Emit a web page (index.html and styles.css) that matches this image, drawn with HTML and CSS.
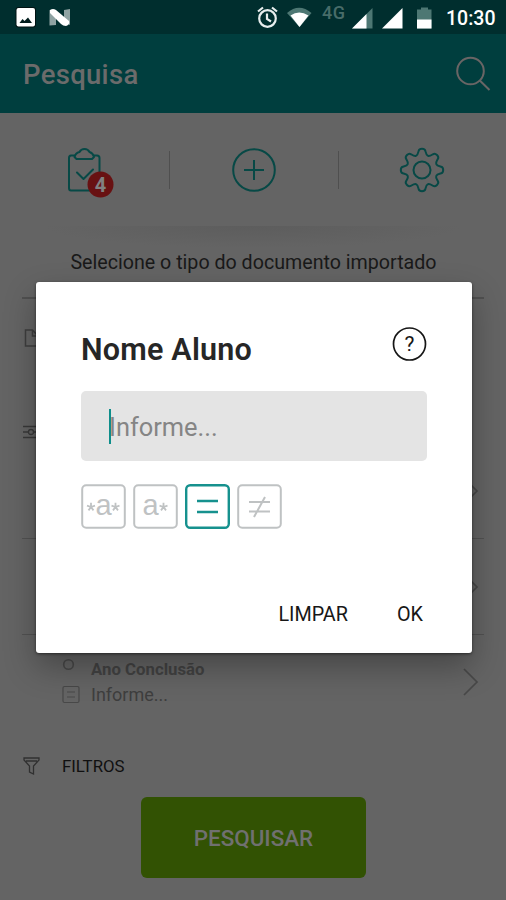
FILE: index.html
```html
<!DOCTYPE html>
<html lang="pt-BR">
<head>
<meta charset="utf-8">
<title>Pesquisa</title>
<link rel="stylesheet" href="styles.css">
</head>
<body>
<div class="screen">
  <div class="status">
    <svg class="status-left" width="80" height="34" viewBox="0 0 80 34">
      <rect x="15.500" y="7" width="20.500" height="20.500" rx="3" fill="#000" opacity=".6"/>
      <rect x="16.500" y="8" width="18.500" height="18.500" rx="2" fill="#fff"/>
      <path d="M19.500 23 L22.500 19 L24.500 21 L28 17.500 L32 23 Z" fill="#001c1c"/>
      <path d="M49.500 10 L56 12 V25 L49.500 25.500 Z M64 10 L70 9 V25 L64 22 Z" fill="#8fa3a3"/>
      <path d="M50 10 Q53 8 56 10 L69 21 Q70 25 66 26 Q63 26 61 24 L50 13 Z" fill="#fff"/>
    </svg>
    <div class="status-right">
      <svg width="188" height="34" viewBox="0 0 188 34">
        <g fill="none" stroke="#e8eeee" stroke-width="2.200">
          <circle cx="14.500" cy="18.500" r="8.300"/>
          <path d="M14 13.500 V19 L18 21.500 M5 11.500 L10 7.500 M19 7.500 L24 11.500"/>
        </g>
        <path d="M34 13 Q46 2.500 58.500 13 L46.500 27 Z" fill="#4d7773"/>
        <path d="M37.500 15.500 Q46 9.500 55.500 15.500 L46.500 27 Z" fill="#fff"/>
        <text class="net" x="69" y="19">4G</text>
        <path d="M119.500 8 V28.500 H99 Z" fill="#4d7773"/>
        <path d="M113.500 14 V28.500 H99 Z M149.500 8 V28.500 H129 Z" fill="#fff"/>
        <path d="M164 9.500 H168 V7.500 H175 V9.500 H178.500 V28.500 H164 Z" fill="#4d7773"/>
        <path d="M164 19.500 H178.500 V28.500 H164 Z" fill="#fff"/>
      </svg>
      <span class="clock">10:30</span>
    </div>
  </div>
  <header class="bar">
    <h1>Pesquisa</h1>
    <svg width="36" height="36" viewBox="0 0 36 36" fill="none" stroke="#696565" stroke-width="2">
      <circle cx="15.500" cy="15" r="13.300"/><path d="M24.800 24.500 L34.500 34"/>
    </svg>
  </header>
  <nav class="tools">
    <div class="tool">
      <svg width="48" height="52" viewBox="0 0 48 52">
        <g fill="none" stroke="#074946" stroke-width="2" stroke-linejoin="round" stroke-linecap="round">
          <path d="M8 8.500 H4 Q2 8.500 2 11 V41 Q2 43.500 4 43.500 H30 Q32.500 43.500 32.500 41 V11 Q32.500 8.500 30 8.500 H27"/>
          <path d="M7.500 10 Q8.500 6 12.500 5 Q14 2 17.500 2 Q21 2 22.500 5 Q26 6 27 10 L25 12 H9.500 Z"/>
          <path d="M10 25.500 L16.500 32 L26 22.500"/>
        </g>
        <circle cx="33.500" cy="37.500" r="13" fill="#681112"/>
        <text class="badge" x="33.500" y="45" text-anchor="middle">4</text>
      </svg>
    </div>
    <div class="tool">
      <svg width="46" height="46" viewBox="-23 -23 46 46" fill="none" stroke="#074946" stroke-width="2">
        <circle r="20.800"/><path d="M-10 0 H10 M0 -10 V10"/>
      </svg>
    </div>
    <div class="tool">
      <svg width="46" height="46" viewBox="-23 -23 46 46" fill="none" stroke="#074946" stroke-width="2">
        <defs><path id="tooth" d="M-5.900 -14.200 C-4.100 -15 -3.800 -17.500 -3.300 -19.300 C-2.600 -21.800 2.600 -21.800 3.300 -19.300 C3.800 -17.500 4.100 -15 5.900 -14.200"/></defs>
        <use href="#tooth"/>
        <use href="#tooth" transform="rotate(45)"/>
        <use href="#tooth" transform="rotate(90)"/>
        <use href="#tooth" transform="rotate(135)"/>
        <use href="#tooth" transform="rotate(180)"/>
        <use href="#tooth" transform="rotate(225)"/>
        <use href="#tooth" transform="rotate(270)"/>
        <use href="#tooth" transform="rotate(315)"/>
        <circle r="8.500"/>
      </svg>
    </div>
  </nav>
  <p class="hint">Selecione o tipo do documento importado</p>
  <main class="list">
    <div class="row doc">
      <svg width="18" height="20" viewBox="0 0 18 20" fill="none" stroke="#3e3e3e" stroke-width="1.500"><path d="M3.500 2 H10.500 L16 8 V18 H3.500 Z M10.500 2 V8 H16"/></svg>
    </div>
    <div class="row tune">
      <svg width="20" height="16" viewBox="0 0 20 16" fill="none" stroke="#393939" stroke-width="1.300"><path d="M1 2.500 H20 M1 8 H6 M12 8 H20 M1 13.500 H20"/><circle cx="9" cy="8" r="2.500"/></svg>
    </div>
    <div class="row item">
      <svg class="chev" width="18" height="30" viewBox="0 0 18 30"><path d="M2 2 L15 15 L2 28"/></svg>
    </div>
    <div class="row item">
      <svg class="chev" width="18" height="30" viewBox="0 0 18 30"><path d="M2 2 L15 15 L2 28"/></svg>
    </div>
    <div class="row year">
      <svg width="20" height="50" viewBox="0 0 20 50" fill="none" stroke="#484848" stroke-width="1.600">
        <circle cx="6.500" cy="7.500" r="4.800"/>
        <rect x="1" y="29.500" width="16" height="16" rx="1.500" stroke-width="1.200"/>
        <path d="M5 35 H13 M5 40 H13" stroke-width="1.200"/>
      </svg>
      <div class="year-text"><b>Ano Conclusão</b><span>Informe...</span></div>
      <svg class="chev" width="18" height="30" viewBox="0 0 18 30"><path d="M2 2 L15 15 L2 28"/></svg>
    </div>
    <div class="row filters">
      <svg width="18" height="20" viewBox="0 0 18 20" fill="none" stroke="#303030" stroke-width="1.300"><path d="M2 2 H17 V4 L11.500 10 V18 L7.500 16 V10 L2 4 Z M4 5 H15"/></svg>
      <span>FILTROS</span>
    </div>
  </main>
  <button class="search" type="button">PESQUISAR</button>

  <section class="dialog" role="dialog">
    <div class="dialog-head">
      <h2>Nome Aluno</h2>
      <svg width="36" height="36" viewBox="0 0 36 36">
        <circle cx="18.500" cy="18" r="16" fill="none" stroke="#161616" stroke-width="1.700"/>
        <text class="q" x="18.500" y="25" text-anchor="middle">?</text>
      </svg>
    </div>
    <div class="field"><i class="caret"></i><span>Informe...</span></div>
    <div class="modes">
      <svg class="mode" width="45" height="45" viewBox="0 0 45 45">
        <defs><path id="star" d="M0 0 V-4.200 M0 0 L4 -1.300 M0 0 L2.500 3.400 M0 0 L-2.500 3.400 M0 0 L-4 -1.300"/></defs>
        <rect x="1.200" y="1.200" width="42.600" height="42.600" rx="4"/>
        <text class="letter" x="22.500" y="30.500" text-anchor="middle">a</text>
        <use class="star" href="#star" x="10" y="23"/><use class="star" href="#star" x="34.500" y="23"/>
      </svg>
      <svg class="mode" width="45" height="45" viewBox="0 0 45 45">
        <rect x="1.200" y="1.200" width="42.600" height="42.600" rx="4"/>
        <text class="letter" x="17.500" y="30.500" text-anchor="middle">a</text>
        <use class="star" href="#star" x="30.500" y="23"/>
      </svg>
      <svg class="mode on" width="45" height="45" viewBox="0 0 45 45">
        <rect x="1.200" y="1.200" width="42.600" height="42.600" rx="4"/>
        <path d="M12 17 H33 M12 28 H33"/>
      </svg>
      <svg class="mode" width="45" height="45" viewBox="0 0 45 45">
        <rect x="1.200" y="1.200" width="42.600" height="42.600" rx="4"/>
        <path d="M12 18 H33 M12 27.500 H33 M28 13 L17 33"/>
      </svg>
    </div>
    <div class="actions"><span>LIMPAR</span><span>OK</span></div>
  </section>
</div>
</body>
</html>
```
FILE: styles.css
```css
* { box-sizing: border-box; }
body { margin: 0; font-family: Roboto, "Liberation Sans", sans-serif; }
svg { display: block; flex: none; }
h1, h2, p { margin: 0; }

.screen {
  position: relative;
  width: 506px;
  height: 900px;
  overflow: hidden;
  background: #646464;
}

.status {
  height: 34px;
  display: flex;
  justify-content: space-between;
  background: #002e2e;
}
.status-right { display: flex; align-items: center; width: 253px; }
.clock { margin-left: 5px; font-size: 19.500px; font-weight: 500; color: #fff; white-space: nowrap; padding-top: 2px; }
.net { font-size: 18px; font-weight: 500; letter-spacing: .5px; fill: #486c69; }

.bar {
  height: 79px;
  padding: 0 15px 0 23px;
  display: flex;
  align-items: center;
  justify-content: space-between;
  background: #003e3e;
}
.bar h1 { font-size: 27.500px; font-weight: 500; letter-spacing: .3px; color: #6b6b6b; padding-top: 2px; }

.tools {
  height: 113px;
  display: grid;
  grid-template-columns: 169px 169px 168px;
  align-items: center;
}
.tool { height: 38px; display: flex; align-items: center; justify-content: center; }
.tool + .tool { border-left: 1px solid #4f4f4f; padding-right: 1px; }
.tool:first-child svg { margin: 6px 0 0 13px; }
.badge { font-size: 20px; font-weight: 700; fill: #818181; }

.hint {
  height: 71px;
  padding: 25px 0 0 1px;
  text-align: center;
  font-size: 19.650px;
  line-height: 24px;
  color: #191919;
  white-space: nowrap;
  background: radial-gradient(ellipse 210px 22px at 50% 0, #5d5d5d, #646464) no-repeat;
}

.list { margin: 0 22px; border-top: 2px solid #505050; }
.row { display: flex; align-items: center; }
.doc { height: 78px; }
.tune { height: 66px; padding-top: 47px; align-items: flex-start; }
.item { height: 96px; justify-content: flex-end; border-bottom: 1px solid #525252; }
.item .chev { margin-right: 4px; }
.chev { fill: none; stroke: #484848; stroke-width: 1.700; }
.year { height: 92px; padding: 1px 4px 0 40px; }
.year-text {
  flex: 1;
  margin-left: 9px;
  display: flex;
  flex-direction: column;
  font-size: 18px;
  line-height: 25px;
  color: #3e3e3e;
}
.year-text b { font-size: 16.800px; font-weight: 700; color: #424242; }
.filters { height: 78px; font-size: 16.800px; color: #101010; }
.filters span { margin-left: 22px; }

.search {
  display: block;
  width: 225px;
  height: 81px;
  margin: -8px 0 0 141px;
  border: 0;
  border-radius: 6px;
  background: #325203;
  color: #707070;
  font: 500 22.400px Roboto, sans-serif;
}

.dialog {
  position: absolute;
  left: 36px;
  top: 282px;
  width: 436px;
  height: 371px;
  padding: 44px 45px 0;
  background: #fff;
  border-radius: 3px;
  box-shadow: 0 14px 32px rgba(0, 0, 0, .3), 0 1px 3px rgba(0, 0, 0, .5);
}
.dialog-head { height: 65px; display: flex; justify-content: space-between; }
.dialog h2 { font-size: 30.500px; line-height: 47px; font-weight: 600; letter-spacing: .2px; color: #262626; white-space: nowrap; }
.q { font-size: 21px; fill: #161616; }
.field {
  height: 70px;
  padding-left: 28px;
  display: flex;
  align-items: center;
  border-radius: 5px;
  background: #e4e4e4;
  font-size: 25.400px;
  color: #858585;
}
.field span { padding-top: 2px; }
.caret { width: 2px; height: 35px; margin-right: -2px; background: #0e8e8b; }
.modes { display: flex; gap: 7px; margin-top: 23px; }
.mode { fill: none; stroke: #bfc2c3; stroke-width: 2; }
.mode.on { stroke: #16918e; stroke-width: 2.400; }
.star { stroke-width: 1.800; }
.letter { font: 29px "Liberation Sans", sans-serif; fill: #bfc2c3; stroke: none; }
.actions {
  display: flex;
  justify-content: flex-end;
  gap: 49px;
  margin-top: 74px;
  padding-right: 4px;
  font-size: 19.800px;
  line-height: 24px;
  color: #171717;
}
```
